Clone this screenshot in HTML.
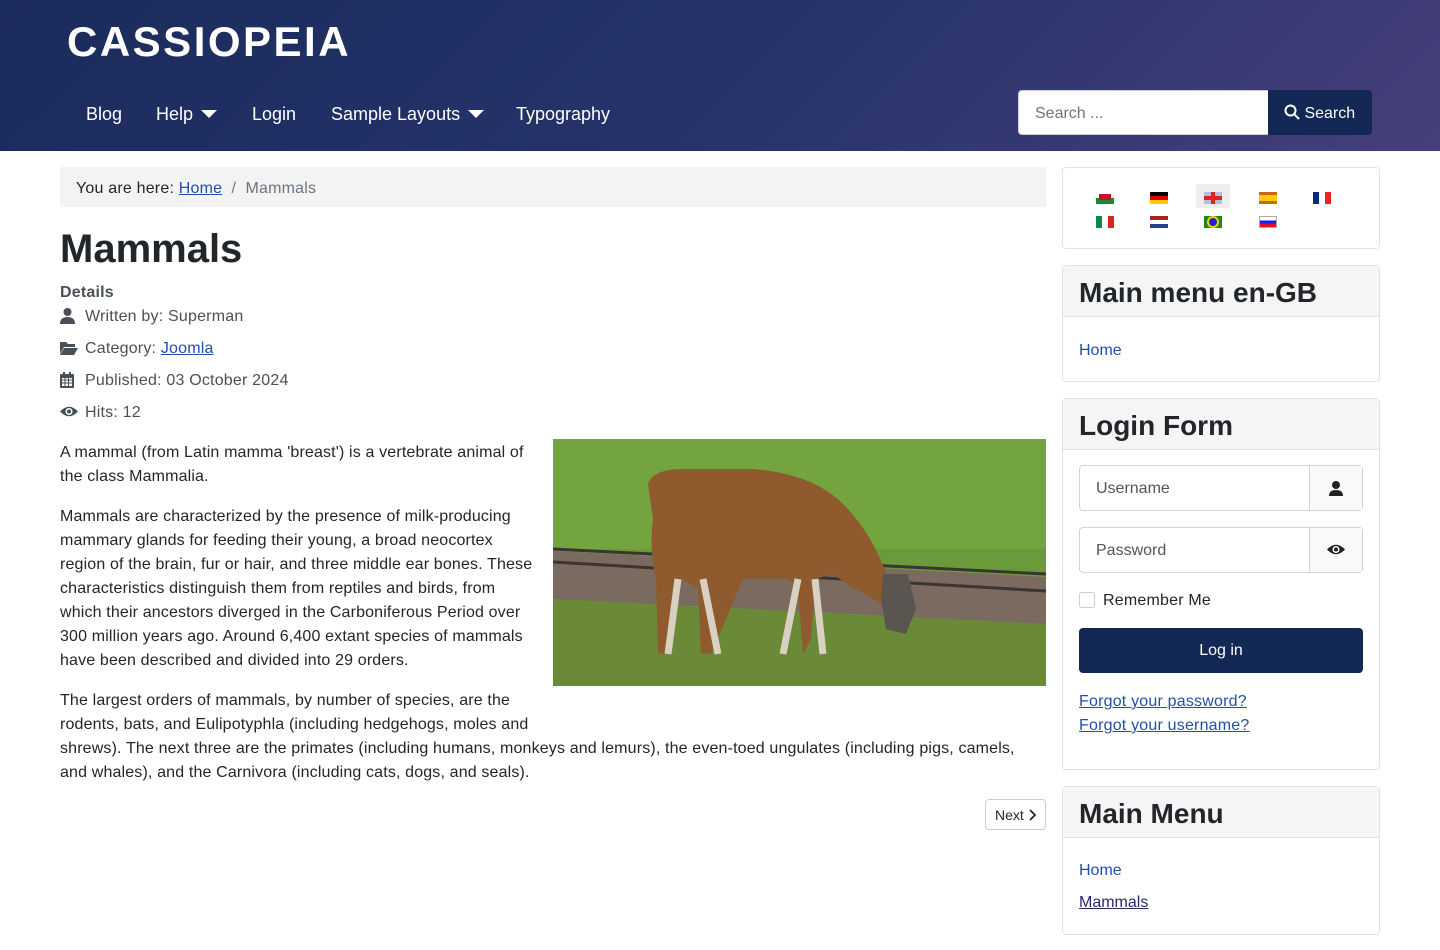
<!DOCTYPE html>
<html><head><meta charset="utf-8"><style>
*{box-sizing:border-box;margin:0;padding:0}
body{width:1440px;height:950px;overflow:hidden;font-family:"Liberation Sans",sans-serif;font-size:16px;line-height:24px;color:#22262a;background:#fff;position:relative}
a{color:#224faa}
.hdr{position:absolute;left:0;top:0;width:1440px;height:151px;background:linear-gradient(135deg,#1b2b5b 0%,#25336a 50%,#463f7a 100%)}
.logo{position:absolute;left:67px;top:19px;color:#fff;font-size:42px;font-weight:bold;letter-spacing:2.5px;line-height:46px}
.nav{position:absolute;top:102px;left:86px;color:#fff;font-size:18px;line-height:24px}
.nav span{position:absolute;white-space:nowrap}
.tri{display:inline-block;width:0;height:0;border-left:8px solid transparent;border-right:8px solid transparent;border-top:8px solid #fff;vertical-align:middle;margin-left:8px;margin-top:-3px}
.sin{position:absolute;left:1018px;top:90px;width:251px;height:45px;background:#fff;border:1px solid #ccd;border-radius:4px 0 0 4px;color:#6c757d;padding:12px 16px;line-height:22px}
.sbtn{position:absolute;left:1268px;top:90px;width:104px;height:45px;background:#132855;border-radius:0 4px 4px 0;color:#fff;font-size:16px;line-height:47px;padding-left:16px}
.bc{position:absolute;left:60px;top:167px;width:986px;height:40px;background:#f3f3f3;padding:10px 16px 0;color:#22262a;letter-spacing:.2px}
.bc .g{color:#6c757d}
h1{position:absolute;left:60px;top:225px;font-size:40px;line-height:48px;font-weight:bold}
.meta{position:absolute;left:60px;top:281px;color:#495057;letter-spacing:.2px}
.meta div{position:absolute;left:0;white-space:nowrap}
.meta svg{position:absolute;left:0}
.txt{position:absolute;left:60px;top:441px;width:986px;letter-spacing:.15px}
.txt p{margin-bottom:16px}
.img{float:right;width:493px;height:247px;margin-left:16px;margin-top:-2px;margin-bottom:50px}
.next{position:absolute;left:985px;top:799px;width:61px;height:31px;border:1px solid #ccc;border-radius:4px;font-size:14px;line-height:31px;padding-left:9px;color:#22262a}
.card{position:absolute;left:1062px;width:318px;border:1px solid #dfe3e7;border-radius:4px;background:#fff}
.ch{background:#f5f5f6;border-bottom:1px solid #dfe3e7;height:51px;padding:9px 16px 0;font-size:28px;line-height:36px;font-weight:bold}
.card a{text-decoration:none}
.fl{position:absolute;width:18px;height:12px}
.inp{position:absolute;left:16px;width:284px;height:46px;border:1px solid #ced4da;border-radius:4px;color:#555;padding:12px 16px;line-height:22px}
.inp .ad{position:absolute;right:0;top:0;width:53px;height:44px;border-left:1px solid #ced4da;background:#f8f9fa}
</style></head><body>
<div class="hdr">
<div class="logo">CASSIOPEIA</div>
<div class="nav">
<span style="left:0">Blog</span>
<span style="left:70px">Help<i class="tri"></i></span>
<span style="left:166px">Login</span>
<span style="left:245px">Sample Layouts<i class="tri"></i></span>
<span style="left:430px">Typography</span>
</div>
<div class="sin">Search ...</div>
<div class="sbtn"><svg width="16" height="16" viewBox="0 0 16 16" style="vertical-align:-2px"><circle cx="6.5" cy="6.5" r="5" fill="none" stroke="#fff" stroke-width="2"/><path d="M10 10l5 5" stroke="#fff" stroke-width="2"/></svg> <b style="font-weight:normal">Search</b></div>
</div>

<div class="bc"><span class="g" style="color:#22262a">You are here: </span> <a href="#">Home</a> <span class="g">&nbsp;/&nbsp;</span> <span class="g">Mammals</span></div>
<h1>Mammals</h1>
<div class="meta">
<div style="top:0;font-weight:bold">Details</div>
<svg style="top:27px" width="15" height="16" viewBox="0 0 15 16"><circle cx="7.5" cy="4" r="4" fill="#495057"/><path d="M0 16q0-7 7.5-7t7.5 7z" fill="#495057"/></svg>
<div style="top:24px;left:25px">Written by: Superman</div>
<svg style="top:60px" width="18" height="14" viewBox="0 0 18 14"><path d="M0 1h6l2 2h7v3H4L0 13z" fill="#495057"/><path d="M4 7h14l-4 7H0z" fill="#495057"/></svg>
<div style="top:56px;left:25px">Category: <a href="#">Joomla</a></div>
<svg style="top:91px" width="14" height="16" viewBox="0 0 14 16"><rect x="0" y="2" width="14" height="14" rx="1" fill="#495057"/><rect x="2" y="6" width="10" height="8" fill="#fff"/><rect x="3" y="0" width="2" height="4" fill="#495057"/><rect x="9" y="0" width="2" height="4" fill="#495057"/><path d="M2 8h10M2 11h10M5 6v8M8.5 6v8" stroke="#495057" stroke-width="1"/></svg>
<div style="top:88px;left:25px">Published: 03 October 2024</div>
<svg style="top:124px" width="18" height="13" viewBox="0 0 18 13"><path d="M0 6.5Q9-3 18 6.5Q9 16 0 6.5z" fill="#495057"/><circle cx="9" cy="6.5" r="3.5" fill="#fff"/><circle cx="9" cy="6.5" r="2" fill="#495057"/></svg>
<div style="top:120px;left:25px">Hits: 12</div>
</div>

<div class="txt">
<svg class="img" viewBox="0 0 493 247">
<rect width="493" height="247" fill="#6b9a3a"/>
<rect y="0" width="493" height="110" fill="#73a43e"/>
<path d="M0 112L493 138V185Q300 175 0 160z" fill="#7a6a60"/>
<path d="M0 110L493 135" stroke="#3a3530" stroke-width="3"/>
<path d="M0 123L493 152" stroke="#3a3530" stroke-width="3"/>
<path d="M0 160Q300 175 493 185V247H0z" fill="#6a8a38"/>
<path d="M95 45Q100 30 130 30L200 30Q260 35 290 65Q320 95 335 140L345 150L330 165Q300 150 280 135L262 140L258 200L250 215L245 150L235 140H190L158 215L148 214L145 150L128 140L112 215L105 214L103 140Q96 110 100 80Z" fill="#8f5a2e"/>
<path d="M330 135l25 0 8 35l-10 25l-20-5l-5-30z" fill="#5a5550"/>
<path d="M125 140L115 215M150 140L165 215M245 140L230 215M262 140L270 215" stroke="#d8d0c0" stroke-width="7"/>
</svg>
<p>A mammal (from Latin mamma 'breast') is a vertebrate animal of the class Mammalia.</p>
<p>Mammals are characterized by the presence of milk-producing mammary glands for feeding their young, a broad neocortex region of the brain, fur or hair, and three middle ear bones. These characteristics distinguish them from reptiles and birds, from which their ancestors diverged in the Carboniferous Period over 300 million years ago. Around 6,400 extant species of mammals have been described and divided into 29 orders.</p>
<p>The largest orders of mammals, by number of species, are the rodents, bats, and Eulipotyphla (including hedgehogs, moles and shrews). The next three are the primates (including humans, monkeys and lemurs), the even-toed ungulates (including pigs, camels, and whales), and the Carnivora (including cats, dogs, and seals).</p>
</div>
<div class="next">Next <svg width="8" height="12" viewBox="0 0 8 12" style="vertical-align:-1px"><path d="M2 1l5 5-5 5" fill="none" stroke="#22262a" stroke-width="1.8"/></svg></div>

<div class="card" style="top:167px;height:82px">
<div style="position:absolute;left:133px;top:16px;width:34px;height:24px;background:#eee"></div>
<div class="fl" style="left:33px;top:24px;background:linear-gradient(#fff 50%,#1a8a2a 50%)"><div style="margin:2px 3px;width:12px;height:6px;background:#c8102e"></div></div>
<div class="fl" style="left:87px;top:24px;background:linear-gradient(#000 33%,#d00 33%,#d00 66%,#fc0 66%)"></div>
<div class="fl" style="left:141px;top:24px;background:#b8bfd8"><div style="position:absolute;left:7px;width:4px;height:12px;background:#d22"></div><div style="position:absolute;top:4px;width:18px;height:4px;background:#d22"></div></div>
<div class="fl" style="left:196px;top:24px;background:linear-gradient(#c61 25%,#fc0 25%,#fc0 75%,#c61 75%)"></div>
<div class="fl" style="left:250px;top:24px;background:linear-gradient(90deg,#0a2a80 33%,#fff 33%,#fff 66%,#e22 66%)"></div>
<div class="fl" style="left:33px;top:48px;background:linear-gradient(90deg,#0a8a4a 33%,#fff 33%,#fff 66%,#d22 66%)"></div>
<div class="fl" style="left:87px;top:48px;background:linear-gradient(#a22 33%,#fff 33%,#fff 66%,#248 66%)"></div>
<div class="fl" style="left:141px;top:48px;background:#1a8a1a"><div style="margin:2px 5px;width:8px;height:8px;border-radius:50%;background:#22c;box-shadow:0 0 0 2px #fc0"></div></div>
<div class="fl" style="left:196px;top:48px;background:linear-gradient(#fff 33%,#12e 33%,#12e 66%,#d12 66%);border:1px solid #aaa"></div>
</div>

<div class="card" style="top:265px;height:117px">
<div class="ch">Main menu en-GB</div>
<a href="#" style="position:absolute;left:16px;top:73px">Home</a>
</div>

<div class="card" style="top:398px;height:372px">
<div class="ch">Login Form</div>
<div class="inp" style="top:66px">Username<div class="ad"><svg style="margin:15px 19px" width="14" height="15" viewBox="0 0 14 15"><circle cx="7" cy="4" r="4" fill="#222"/><path d="M0 15q0-6 7-6t7 6z" fill="#222"/></svg></div></div>
<div class="inp" style="top:128px">Password<div class="ad"><svg style="margin:15px 17px" width="18" height="13" viewBox="0 0 18 13"><path d="M0 6.5Q9-3 18 6.5Q9 16 0 6.5z" fill="#222"/><circle cx="9" cy="6.5" r="3.5" fill="#fff"/><circle cx="9" cy="6.5" r="2" fill="#222"/></svg></div></div>
<div style="position:absolute;left:16px;top:193px;width:16px;height:16px;border:1px solid #ccc;border-radius:3px"></div>
<div style="position:absolute;left:40px;top:190px;letter-spacing:.2px">Remember Me</div>
<div style="position:absolute;left:16px;top:229px;width:284px;height:45px;background:#132855;border-radius:4px;color:#fff;text-align:center;line-height:46px">Log in</div>
<a href="#" style="position:absolute;left:16px;top:291px;text-decoration:underline;letter-spacing:.2px">Forgot your password?</a>
<a href="#" style="position:absolute;left:16px;top:315px;text-decoration:underline;letter-spacing:.2px">Forgot your username?</a>
</div>

<div class="card" style="top:786px;height:149px">
<div class="ch">Main Menu</div>
<a href="#" style="position:absolute;left:16px;top:72px">Home</a>
<a href="#" style="position:absolute;left:16px;top:104px;text-decoration:underline;color:#2a2a6a">Mammals</a>
</div>
</body></html>
